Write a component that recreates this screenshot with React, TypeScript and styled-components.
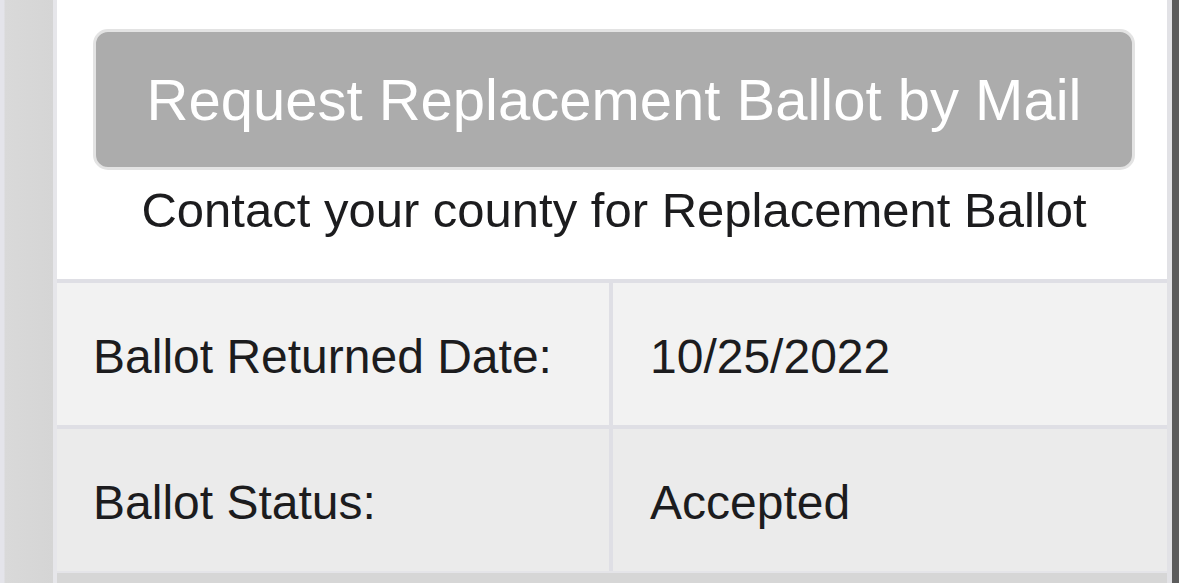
import React from 'react';
import styled, { createGlobalStyle } from 'styled-components';

const GlobalStyle = createGlobalStyle`
  html, body {
    margin: 0;
    padding: 0;
    background: #d6d6d6;
    font-family: 'Liberation Sans', Arial, sans-serif;
  }
`;

const Page = styled.div`
  display: flex;
  width: 1179px;
  height: 583px;
  overflow: hidden;
  background: #d6d6d6;
`;

const LeftEdge = styled.div`
  width: 53px;
  flex-shrink: 0;
  background: linear-gradient(
    to right,
    #e4e4ea 0px,
    #e4e4ea 4px,
    #d9d9d9 5px,
    #d5d5d5 100%
  );
`;

const RightEdge = styled.div`
  width: 7px;
  flex-shrink: 0;
  background: #5c5c5c;
`;

const Panel = styled.div`
  flex: 1;
  display: flex;
  flex-direction: column;
  border-left: 4px solid #e6e6ea;
  border-right: 5px solid #e2e2e6;
`;

const Header = styled.div`
  height: 279px;
  background: #ffffff;
  display: flex;
  flex-direction: column;
  align-items: center;
  padding: 29px 32px 0 36px;
  box-sizing: border-box;
`;

const ReplaceButton = styled.button`
  width: 100%;
  height: 141px;
  background: #acacac;
  border: 3px solid #e3e3e3;
  border-radius: 15px;
  color: #ffffff;
  font-family: 'Liberation Sans', Arial, sans-serif;
  font-size: 58px;
  padding: 0;
  cursor: default;
`;

const Note = styled.div`
  margin-top: 12px;
  font-size: 49px;
  line-height: 56px;
  color: #1c1c1e;
  text-align: center;
`;

const Table = styled.div`
  display: grid;
  grid-template-columns: 556px 1fr;
  border-top: 4px solid #dfdfe5;
  border-bottom: 2px solid #e4e4e8;
`;

const Cell = styled.div<{ $shade: string; $last?: boolean; $left?: boolean }>`
  height: ${(p) => (p.$last ? '142px' : '146px')};
  box-sizing: border-box;
  display: flex;
  align-items: center;
  padding: 4px 0 0 ${(p) => (p.$left ? '36px' : '37px')};
  background: ${(p) => p.$shade};
  border-right: ${(p) => (p.$left ? '4px solid #dfdfe5' : 'none')};
  border-bottom: ${(p) => (p.$last ? 'none' : '4px solid #dfdfe5')};
  font-size: 48px;
  color: #1c1c1e;
  white-space: nowrap;
`;

const Filler = styled.div`
  flex: 1;
  background: #d6d6d6;
`;

const rows = [
  { label: 'Ballot Returned Date:', value: '10/25/2022', shade: '#f2f2f2' },
  { label: 'Ballot Status:', value: 'Accepted', shade: '#ebebeb' },
];

const App: React.FC = () => {
  return (
    <>
      <GlobalStyle />
      <Page>
        <LeftEdge />
        <Panel>
          <Header>
            <ReplaceButton type="button">
              Request Replacement Ballot by Mail
            </ReplaceButton>
            <Note>Contact your county for Replacement Ballot</Note>
          </Header>
          <Table>
            {rows.map((row, i) => (
              <React.Fragment key={row.label}>
                <Cell $shade={row.shade} $left $last={i === rows.length - 1}>
                  {row.label}
                </Cell>
                <Cell $shade={row.shade} $last={i === rows.length - 1}>
                  {row.value}
                </Cell>
              </React.Fragment>
            ))}
          </Table>
          <Filler />
        </Panel>
        <RightEdge />
      </Page>
    </>
  );
};

export default App;
